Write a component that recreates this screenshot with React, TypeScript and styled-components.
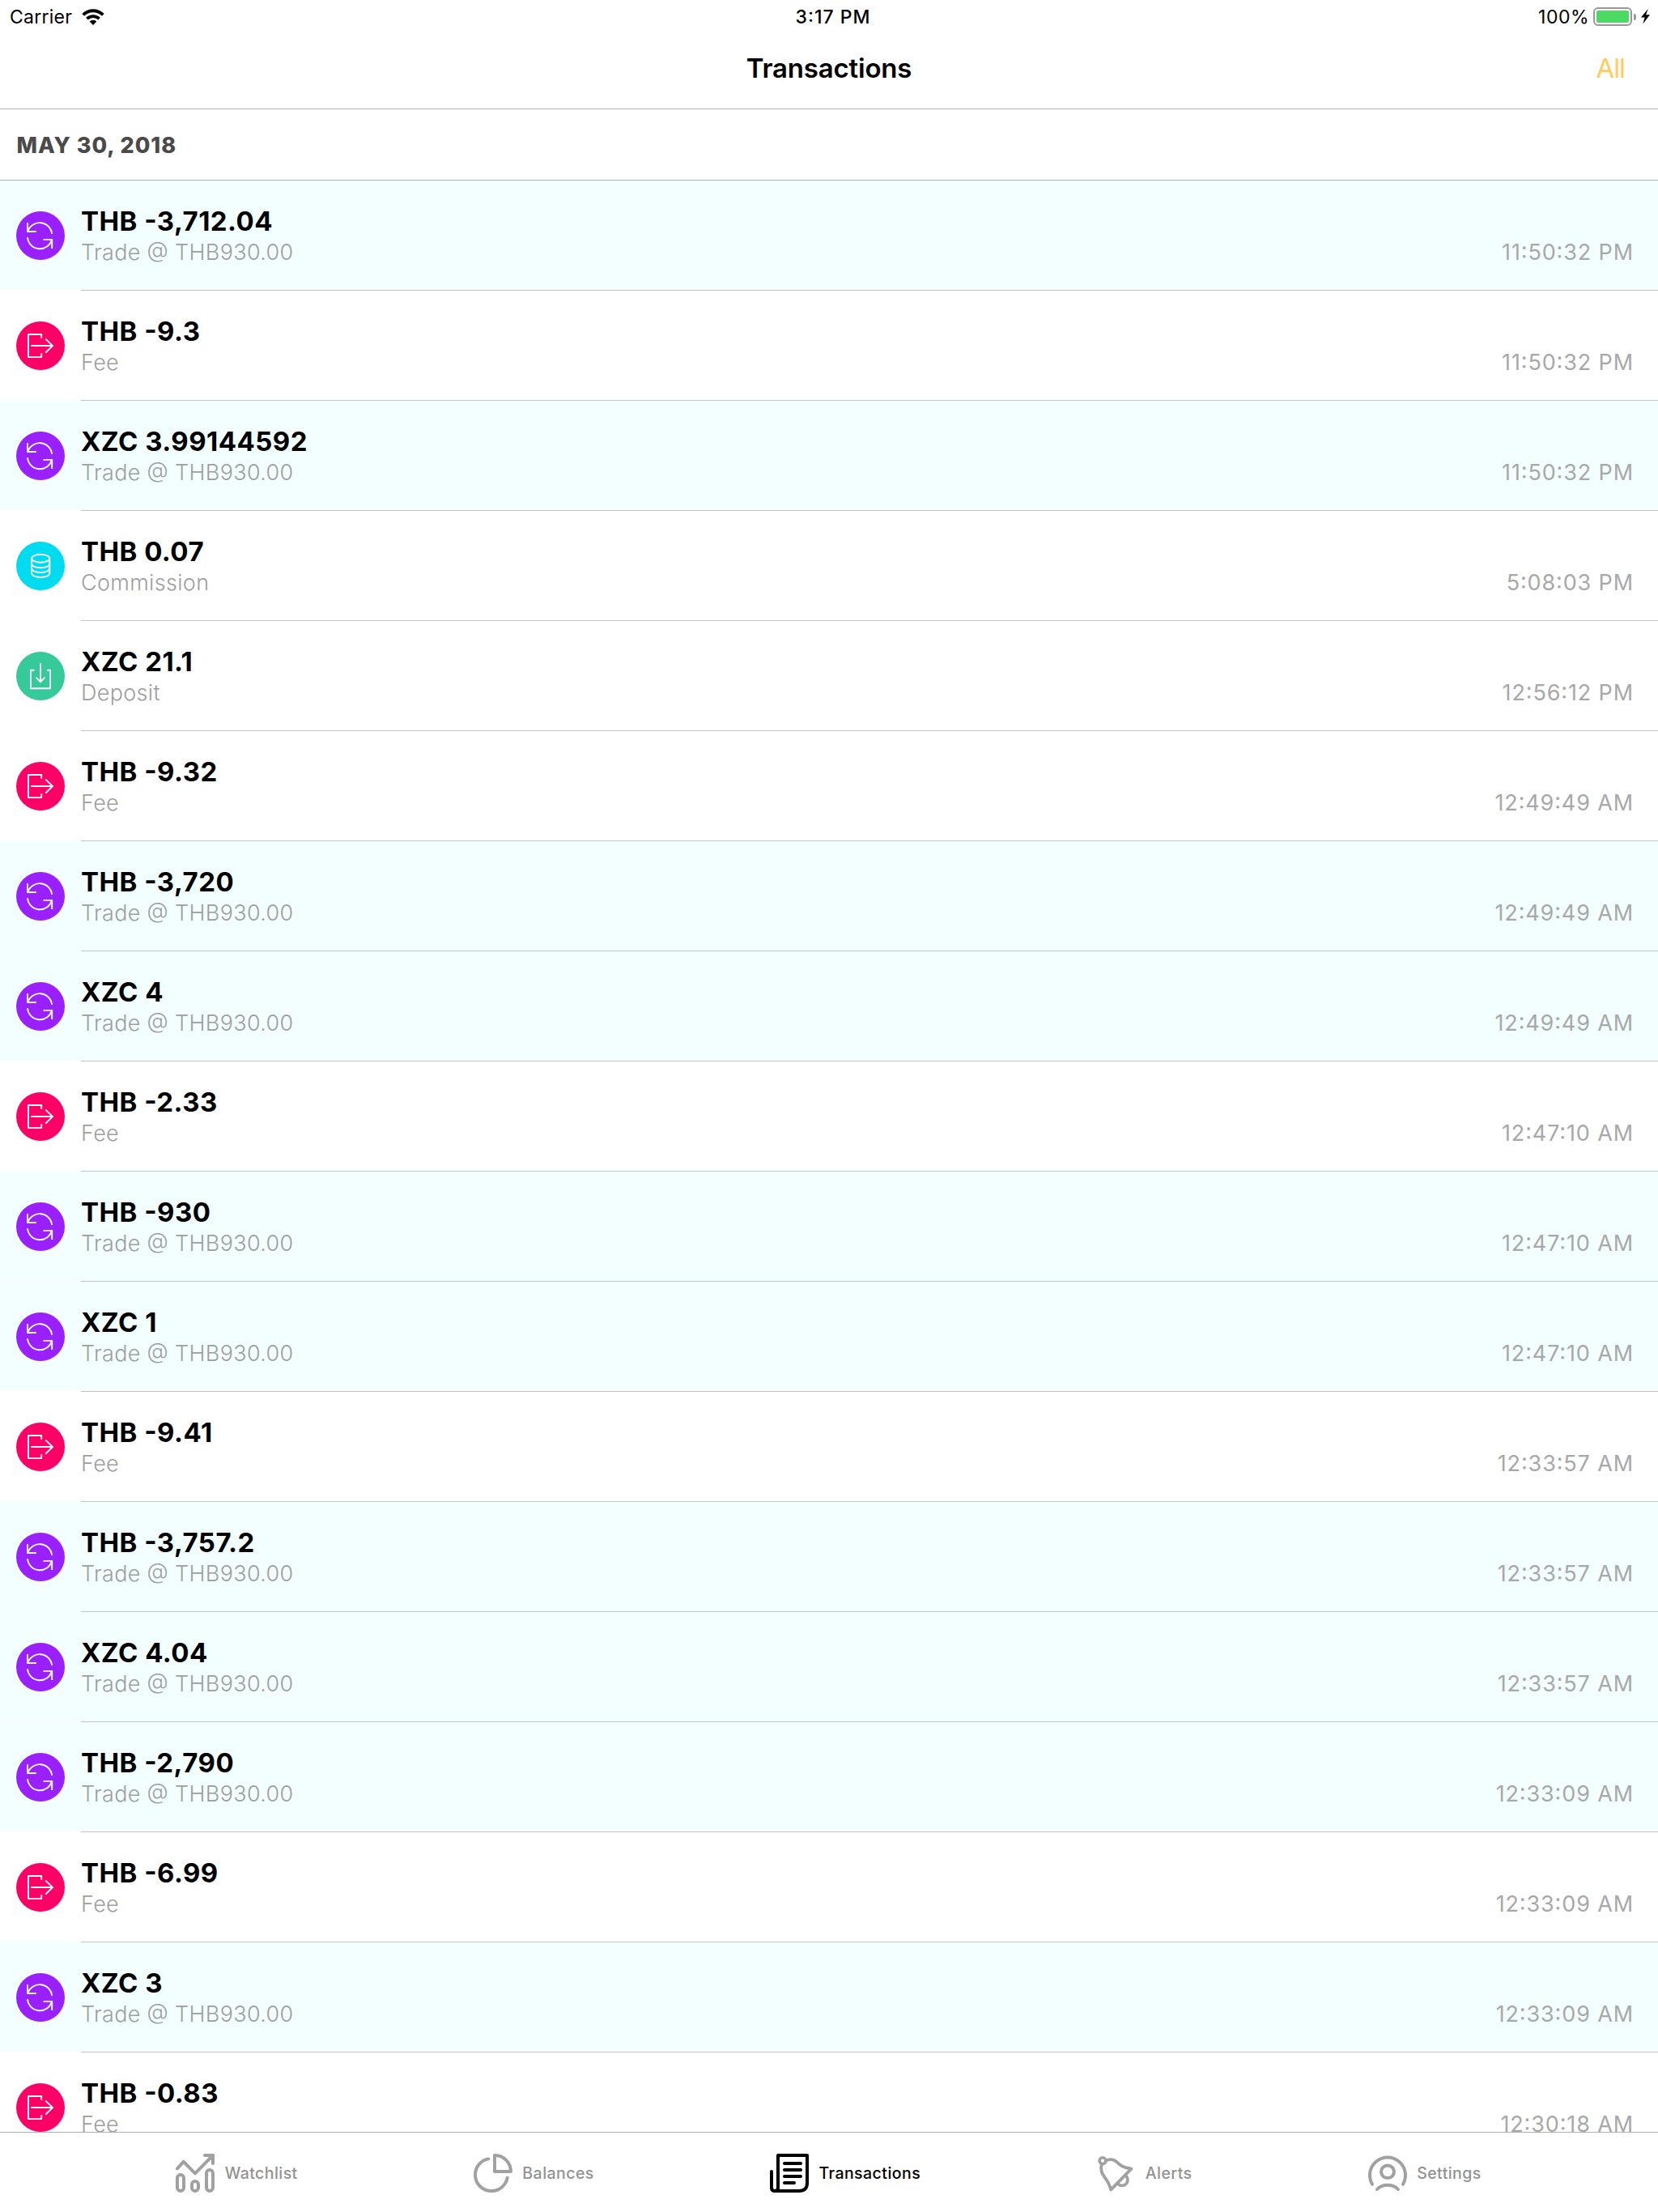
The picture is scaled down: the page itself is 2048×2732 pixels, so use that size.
import React from "react";
import styled, { createGlobalStyle } from "styled-components";

const GlobalStyle = createGlobalStyle`
  *, *::before, *::after { box-sizing: border-box; }
  html, body { margin: 0; padding: 0; background: #fff; }
  body {
    font-family: Inter, "Liberation Sans", sans-serif;
    font-feature-settings: "calt" 1, "kern" 1;
    color: #000;
  }
`;

const Screen = styled.div`
  display: flex;
  flex-direction: column;
  width: 2048px;
  height: 2732px;
  overflow: hidden;
  background: #fff;
`;

const StatusBar = styled.div`
  flex: none;
  display: grid;
  grid-template-columns: 1fr auto 1fr;
  align-items: center;
  height: 41px;
  padding: 0 10px 0 12px;
  font-size: 23px;
  line-height: 28px;
`;

const StatusLeft = styled.div`
  display: flex;
  align-items: center;
  gap: 12px;
  letter-spacing: 0.26px;
`;

const Clock = styled.div`
  padding-left: 8px;
  font-weight: 500;
  letter-spacing: 1px;
`;

const StatusRight = styled.div`
  display: flex;
  align-items: center;
  justify-content: flex-end;
  letter-spacing: 0.5px;
`;

const Battery = styled.div`
  width: 48px;
  height: 23px;
  margin-left: 5px;
  padding: 2px;
  border: 2px solid #98989b;
  border-radius: 6px;
`;

const BatteryLevel = styled.div`
  height: 100%;
  border-radius: 2px;
  background: #4cd964;
`;

const BatteryCap = styled.div`
  width: 3px;
  height: 8px;
  margin: 0 6px 0 2px;
  border-radius: 0 3px 3px 0;
  background: #98989b;
`;

const NavBar = styled.header`
  flex: none;
  display: grid;
  grid-template-columns: 1fr auto 1fr;
  align-items: center;
  height: 94px;
  padding: 0 41px 7px;
  border-bottom: 1px solid #b2b2b2;
  font-size: 33px;
  line-height: 40px;
`;

const NavTitle = styled.h1`
  grid-column: 2;
  margin: 0;
  font-size: inherit;
  font-weight: 600;
  letter-spacing: -0.19px;
`;

const NavAction = styled.button`
  justify-self: end;
  padding: 0;
  border: 0;
  background: none;
  font: inherit;
  font-weight: 400;
  letter-spacing: -1.1px;
  color: #fecb5c;
`;

const SectionHeader = styled.h2`
  flex: none;
  display: flex;
  align-items: center;
  height: 88px;
  margin: 0;
  padding: 1px 20.5px 0;
  border-bottom: 1px solid #b2b2b2;
  font-size: 27px;
  font-weight: 800;
  letter-spacing: 0.98px;
  color: #4a4a4a;
`;

const List = styled.ul`
  flex: 1;
  min-height: 0;
  margin: 0;
  padding: 0;
  overflow: hidden;
  list-style: none;
`;

const Row = styled.li`
  display: grid;
  grid-template-columns: 100px 1fr;
  align-items: start;
  height: 136px;
`;

const IconCell = styled.div<{ $tinted: boolean }>`
  display: flex;
  align-items: center;
  height: 135px;
  padding: 1px 0 0 20px;
  background: ${(p) => (p.$tinted ? "#f2fffe" : "#fff")};
`;

const Badge = styled.div<{ $color: string }>`
  width: 60px;
  height: 60px;
  border-radius: 50%;
  background: ${(p) => p.$color};
`;

const Body = styled.div<{ $tinted: boolean }>`
  display: flex;
  align-items: flex-end;
  justify-content: space-between;
  height: 136px;
  padding: 0 30px 28px 0;
  border-bottom: 1px solid #c6c6c9;
  background: ${(p) => (p.$tinted ? "#f2fffe" : "#fff")};
`;

const Amount = styled.div`
  margin-bottom: 2px;
  font-size: 33px;
  font-weight: 700;
  line-height: 38px;
  letter-spacing: 0.45px;
`;

const Detail = styled.div`
  font-size: 27px;
  font-weight: 300;
  line-height: 36px;
  letter-spacing: 0.32px;
  color: #9e9e9e;
`;

const Time = styled.time`
  font-size: 27px;
  line-height: 36px;
  letter-spacing: 0.87px;
  color: #a8a8a8;
`;

const TabBar = styled.nav`
  flex: none;
  display: flex;
  align-items: center;
  justify-content: space-evenly;
  height: 99px;
  padding: 2px 1px 0 0;
  border-top: 1px solid #b0b0b0;
  background: #fff;
`;

const Tab = styled.div<{ $active: boolean }>`
  display: flex;
  align-items: center;
  gap: 12.5px;
  font-size: 19.5px;
  font-weight: 500;
  line-height: 26px;
  letter-spacing: 0.45px;
  color: ${(p) => (p.$active ? "#000" : "#929292")};

  svg {
    color: ${(p) => (p.$active ? "#000" : "#a1a1a1")};
  }
`;

const LineSvg = styled.svg`
  display: block;
  fill: none;
  stroke: currentColor;
`;

const BadgeSvg = styled(LineSvg)`
  color: #fff;
  stroke-width: 1.9;
`;

const TabSvg = styled(LineSvg)`
  stroke-width: 4;
  stroke-linecap: round;
  stroke-linejoin: round;
`;

const SolidSvg = styled.svg`
  display: block;
`;

type Kind = "trade" | "fee" | "commission" | "deposit";

const badges: Record<Kind, { color: string; glyph: React.ReactNode }> = {
  trade: {
    color: "#9b20ff",
    glyph: (
      <>
        <path d="M14 14V25H24.8" />
        <path d="M14.4 25A15.2 15.2 0 0 1 44.1 28" />
        <path d="M14 32A15.2 15.2 0 0 0 43.8 35.2" />
        <path d="M33.5 34.9H44.2V46" />
      </>
    ),
  },
  fee: {
    color: "#ff0066",
    glyph: (
      <>
        <path d="M31.2 20.8V16H15V44.1H31.2V39.2" strokeLinejoin="round" />
        <path d="M18.3 30H45" />
        <path d="M36.2 21.6L45 30L36.2 38.6" />
      </>
    ),
  },
  commission: {
    color: "#00dcef",
    glyph: (
      <>
        <ellipse cx="30.2" cy="20.7" rx="11.1" ry="5" />
        <path d="M19.1 20.7V39c0 2.9 5 5 11.1 5s11.1-2.1 11.1-5V20.7" />
        <path d="M19.1 27.2c0 2.9 5 5 11.1 5s11.1-2.1 11.1-5" />
        <path d="M19.1 33.1c0 2.9 5 5 11.1 5s11.1-2.1 11.1-5" />
      </>
    ),
  },
  deposit: {
    color: "#36c99a",
    glyph: (
      <>
        <path d="M22.4 22.8H18V45.2H42V22.8H38" strokeLinejoin="round" />
        <path d="M30 14.3V37" />
        <path d="M24.5 31.6L30 37.1L35.5 31.6" />
      </>
    ),
  },
};

const transactions: { kind: Kind; amount: string; detail: string; time: string }[] = [
  { kind: "trade", amount: "THB -3,712.04", detail: "Trade @ THB930.00", time: "11:50:32 PM" },
  { kind: "fee", amount: "THB -9.3", detail: "Fee", time: "11:50:32 PM" },
  { kind: "trade", amount: "XZC 3.99144592", detail: "Trade @ THB930.00", time: "11:50:32 PM" },
  { kind: "commission", amount: "THB 0.07", detail: "Commission", time: "5:08:03 PM" },
  { kind: "deposit", amount: "XZC 21.1", detail: "Deposit", time: "12:56:12 PM" },
  { kind: "fee", amount: "THB -9.32", detail: "Fee", time: "12:49:49 AM" },
  { kind: "trade", amount: "THB -3,720", detail: "Trade @ THB930.00", time: "12:49:49 AM" },
  { kind: "trade", amount: "XZC 4", detail: "Trade @ THB930.00", time: "12:49:49 AM" },
  { kind: "fee", amount: "THB -2.33", detail: "Fee", time: "12:47:10 AM" },
  { kind: "trade", amount: "THB -930", detail: "Trade @ THB930.00", time: "12:47:10 AM" },
  { kind: "trade", amount: "XZC 1", detail: "Trade @ THB930.00", time: "12:47:10 AM" },
  { kind: "fee", amount: "THB -9.41", detail: "Fee", time: "12:33:57 AM" },
  { kind: "trade", amount: "THB -3,757.2", detail: "Trade @ THB930.00", time: "12:33:57 AM" },
  { kind: "trade", amount: "XZC 4.04", detail: "Trade @ THB930.00", time: "12:33:57 AM" },
  { kind: "trade", amount: "THB -2,790", detail: "Trade @ THB930.00", time: "12:33:09 AM" },
  { kind: "fee", amount: "THB -6.99", detail: "Fee", time: "12:33:09 AM" },
  { kind: "trade", amount: "XZC 3", detail: "Trade @ THB930.00", time: "12:33:09 AM" },
  { kind: "fee", amount: "THB -0.83", detail: "Fee", time: "12:30:18 AM" },
];

const tabs: { label: string; glyph: React.ReactNode }[] = [
  {
    label: "Watchlist",
    glyph: (
      <>
        <path d="M2 18.3L9.7 9.8L24 24.4L45.5 2.5" />
        <path d="M36 2H46V12" />
        <path d="M41 2H46V7Z" />
        <rect x="2" y="26" width="8" height="20" rx="4" />
        <rect x="20" y="34" width="8" height="12" rx="4" />
        <rect x="38" y="20" width="8" height="26" rx="4" />
      </>
    ),
  },
  {
    label: "Balances",
    glyph: (
      <>
        <path d="M18.3 6.4A20 20 0 1 0 41.7 29.7" />
        <path d="M26 2V22H46A20 20 0 0 0 26 2Z" />
      </>
    ),
  },
  {
    label: "Transactions",
    glyph: (
      <>
        <path d="M10 42V2H46V36C46 42.5 42.5 46 36 46H6C3.5 46 2 44.5 2 42V22" />
        <path d="M10 42C10 44.5 8.5 46 6 46" />
        <path d="M18 12H38M18 20H38M18 28H38M18 36H30" />
      </>
    ),
  },
  {
    label: "Alerts",
    glyph: (
      <>
        <circle cx="8" cy="8.7" r="3.9" strokeWidth="3.6" />
        <path
          d="M11.8 8.6C17 6.2 22.5 7 27 11.6C31 15.5 36 17.6 43.5 18.6L18.3 44.4C16.3 38 14.5 33.8 10.6 29.2C6.2 24 4.8 19.5 7 12.5"
          strokeWidth="3.8"
        />
        <path d="M37 27.5A6.8 6.8 0 1 1 26.8 37.3" strokeWidth="3.8" />
      </>
    ),
  },
  {
    label: "Settings",
    glyph: (
      <>
        <path d="M5 37.7A22 22 0 1 1 43 37.7" />
        <ellipse cx="24" cy="22.3" rx="8" ry="7.8" />
        <path d="M11 44C17.5 37.1 30.5 37.1 37 44" />
      </>
    ),
  },
];

const activeTab = "Transactions";

export default function App() {
  return (
    <>
      <GlobalStyle />
      <Screen>
        <StatusBar>
          <StatusLeft>
            Carrier
            <SolidSvg width="28" height="20" viewBox="0 0 28 20">
              <path d="M1.7 7.4A17.4 17.4 0 0 1 26.3 7.4" fill="none" stroke="#000" strokeWidth="3.9" />
              <path d="M6.4 12.2A10.9 10.9 0 0 1 21.6 12.2" fill="none" stroke="#000" strokeWidth="3.7" />
              <path d="M14 19.9L9.6 15.6A6.3 6.3 0 0 1 18.4 15.6Z" />
            </SolidSvg>
          </StatusLeft>
          <Clock>3:17 PM</Clock>
          <StatusRight>
            100%
            <Battery>
              <BatteryLevel />
            </Battery>
            <BatteryCap />
            <SolidSvg width="11" height="19" viewBox="0 0 11 19">
              <path d="M8.7 0L0 10.4H4.7L2.3 18.6L11 7.3H6.1Z" />
            </SolidSvg>
          </StatusRight>
        </StatusBar>
        <NavBar>
          <NavTitle>Transactions</NavTitle>
          <NavAction>All</NavAction>
        </NavBar>
        <SectionHeader>MAY 30, 2018</SectionHeader>
        <List>
          {transactions.map((t, i) => {
            const tinted = t.kind === "trade";
            const badge = badges[t.kind];
            return (
              <Row key={i}>
                <IconCell $tinted={tinted}>
                  <Badge $color={badge.color}>
                    <BadgeSvg width="60" height="60" viewBox="0 0 60 60">
                      {badge.glyph}
                    </BadgeSvg>
                  </Badge>
                </IconCell>
                <Body $tinted={tinted}>
                  <div>
                    <Amount>{t.amount}</Amount>
                    <Detail>{t.detail}</Detail>
                  </div>
                  <Time>{t.time}</Time>
                </Body>
              </Row>
            );
          })}
        </List>
        <TabBar>
          {tabs.map((tab) => (
            <Tab key={tab.label} $active={tab.label === activeTab}>
              <TabSvg width="48" height="48" viewBox="0 0 48 48">
                {tab.glyph}
              </TabSvg>
              {tab.label}
            </Tab>
          ))}
        </TabBar>
      </Screen>
    </>
  );
}
